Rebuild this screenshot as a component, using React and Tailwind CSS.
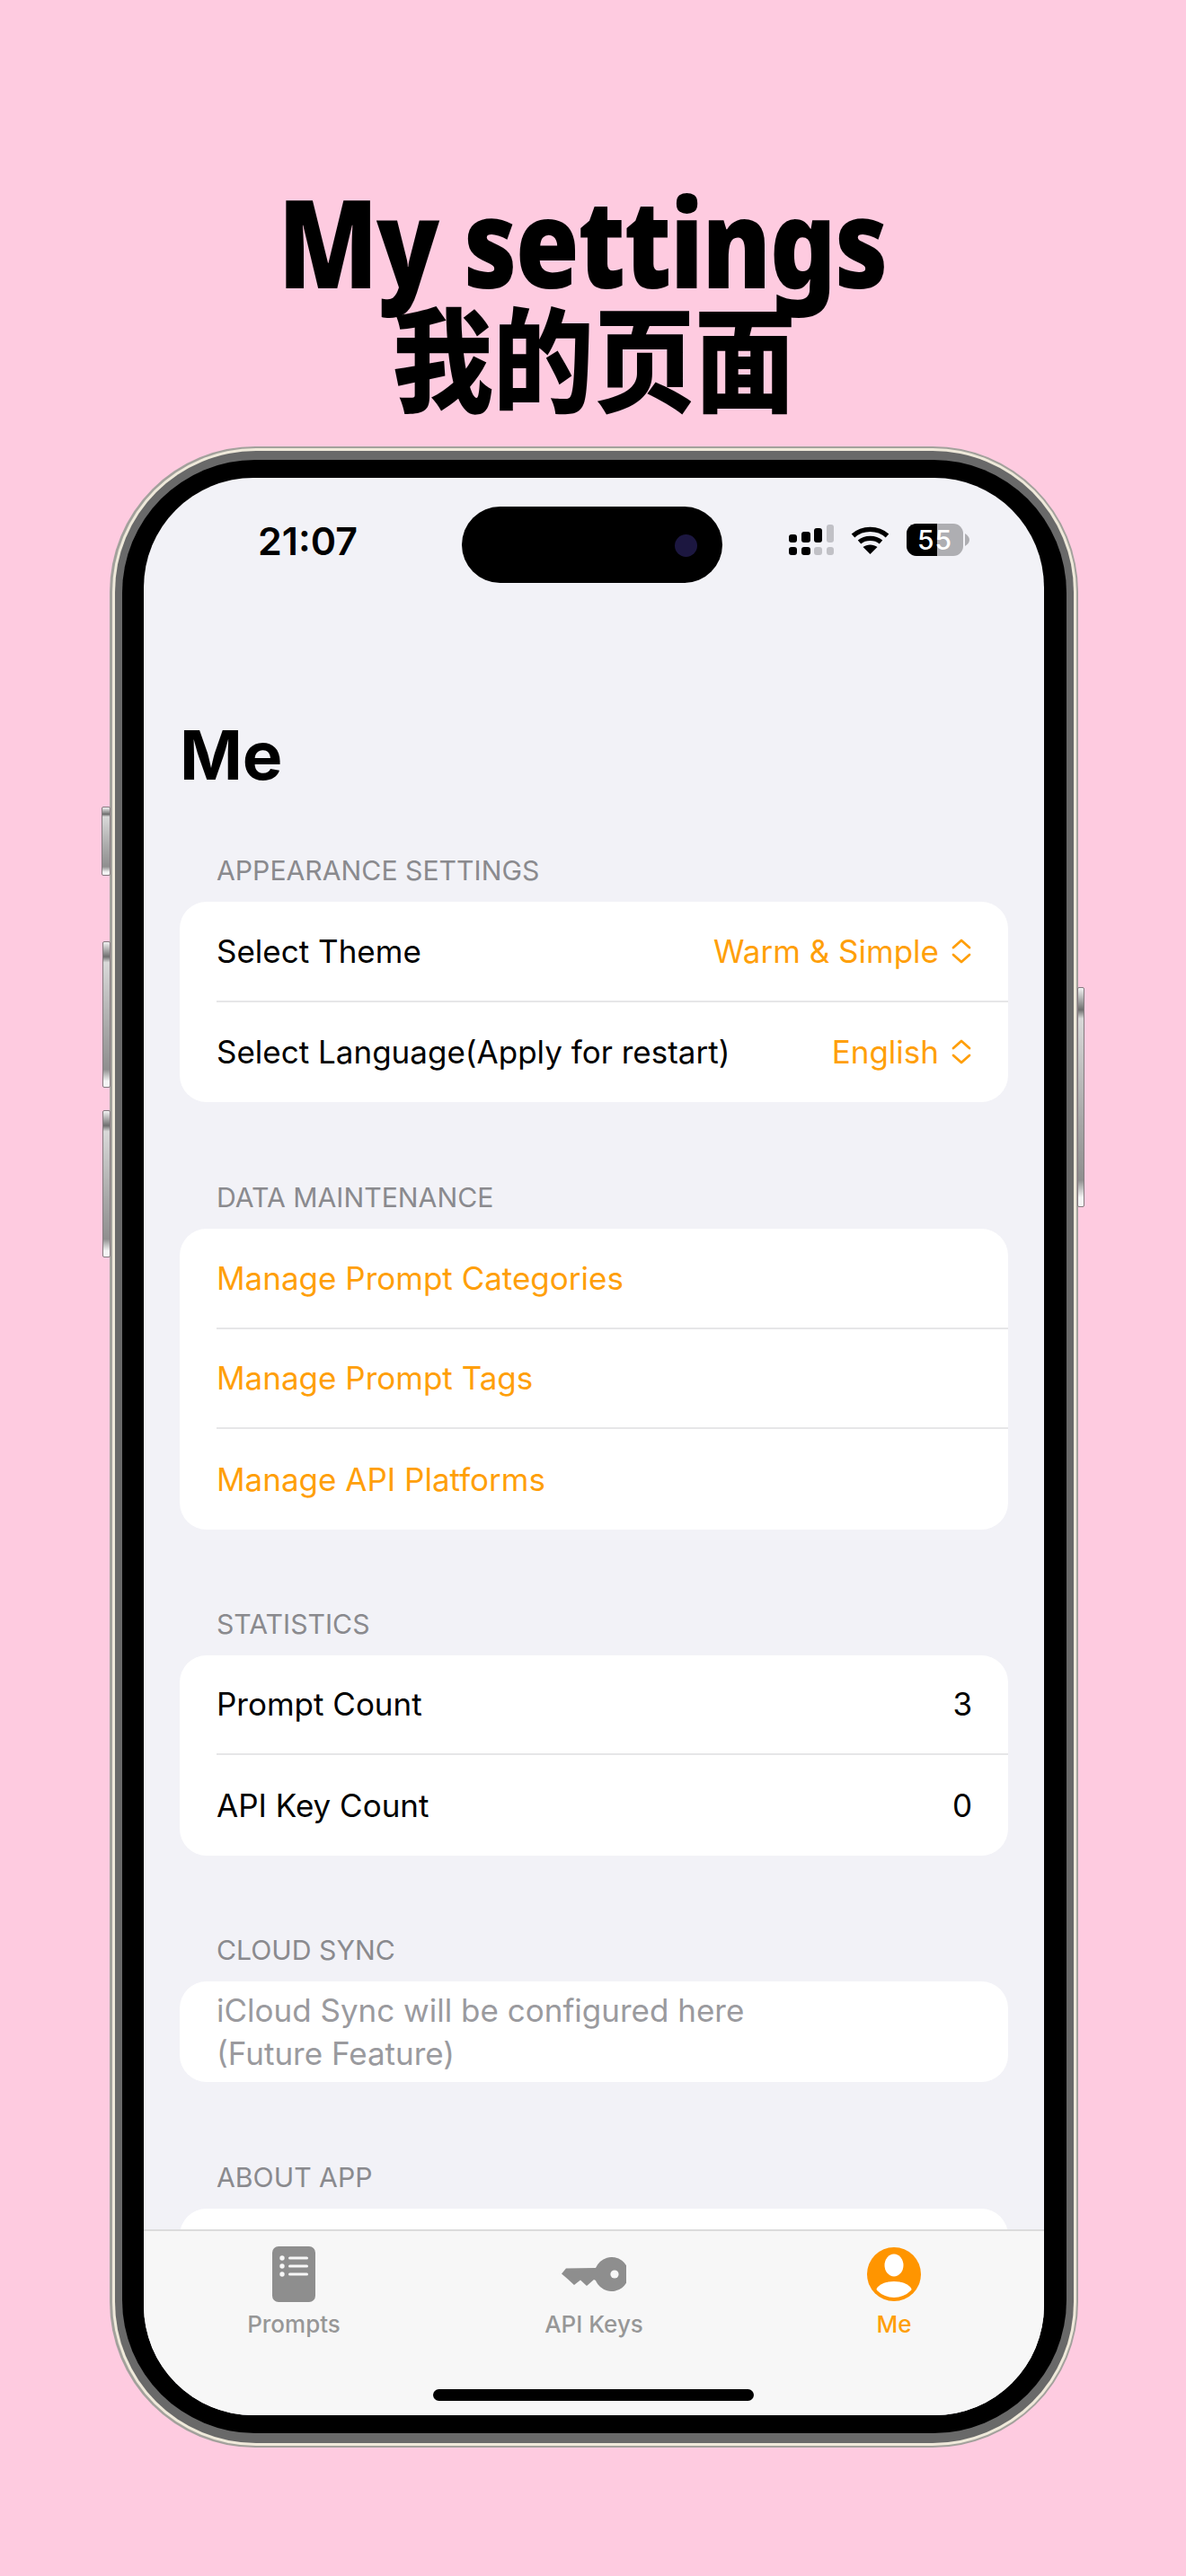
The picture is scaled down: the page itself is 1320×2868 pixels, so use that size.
const ORANGE = 'text-[#ff9f0a]'

const ChevronUpDown = () => (
  <svg width="24" height="32" viewBox="0 0 24 32" fill="none" stroke="#ff9f0a" strokeWidth="2.8" strokeLinecap="round" strokeLinejoin="round" className="ml-[13px]">
    <path d="M3 12 L12 4 L21 12" />
    <path d="M3 20 L12 28 L21 20" />
  </svg>
)

const Row = ({ children, last }) => (
  <div className={`h-[111.5px] ml-[41px] pr-10 flex items-center justify-between text-[35px] ${last ? '' : 'border-b-2 border-[#e6e6e8]'}`}>
    {children}
  </div>
)

const Section = ({ title, children, className = '' }) => (
  <section className={className}>
    <h2 className="h-[41px] ml-[81px] text-[30.2px] leading-[41px] text-[#8a8a8e] font-normal">{title}</h2>
    <div className="mt-[14px] mx-10 bg-white rounded-[30px] overflow-hidden">{children}</div>
  </section>
)

const SideButton = ({ className }) => (
  <div className={`absolute border border-[#85797f] rounded-[2px] bg-[linear-gradient(180deg,#f2f2f2_0%,#6f6f6f_10%,#d8d8d8_14%,#a8a8a8_60%,#8f8f8f_88%,#f4f4f4_96%)] ${className}`} />
)

const SignalIcon = () => (
  <svg width="50" height="34" viewBox="0 0 50 34" fill="#000">
    <rect x="0" y="11" width="9" height="9" rx="3" />
    <rect x="14" y="8" width="10" height="12" rx="3" />
    <rect x="28" y="4" width="9" height="16" rx="3" />
    <rect x="42" y="0" width="8" height="20" rx="3" fill="#c1c1c6" />
    <rect x="0" y="25" width="9" height="9" rx="3" />
    <rect x="14" y="25" width="10" height="9" rx="3" />
    <rect x="28" y="25" width="9" height="9" rx="3" fill="#c1c1c6" />
    <rect x="42" y="25" width="8" height="9" rx="3" fill="#c1c1c6" />
  </svg>
)

const WifiIcon = () => (
  <svg width="43" height="32" viewBox="0 0 43 32" fill="none" stroke="#000" strokeWidth="5.4">
    <path d="M2.5 11.5 C13 2 30 2 40.5 11.5" />
    <path d="M9.5 18.5 C16 13 27 13 33.5 18.5" />
    <path d="M21.5 32 L13.5 24 C18 20.5 25 20.5 29.5 24 Z" fill="#000" stroke="none" />
  </svg>
)

const Battery = () => (
  <div className="flex items-center">
    <div className="relative w-[63px] h-[36px] rounded-[11px] overflow-hidden bg-[#aeaeb2] flex items-center justify-center">
      <div className="absolute left-0 top-0 bottom-0 w-[34px] bg-black" />
      <span className="relative text-white text-[30px] font-medium leading-none font-['Inter',sans-serif] tracking-[1px]">55</span>
    </div>
    <svg width="5" height="14" viewBox="0 0 5 14" className="ml-[2px]"><path d="M0 0 C3 2 5 4 5 7 C5 10 3 12 0 14 Z" fill="#aeaeb2" /></svg>
  </div>
)

const PromptsIcon = () => (
  <svg width="48" height="62" viewBox="0 0 48 62">
    <rect width="48" height="62" rx="7" fill="#8e8e8e" />
    <g fill="#f7f7f7">
      <circle cx="11" cy="13" r="2.7" />
      <circle cx="11" cy="22" r="2.7" />
      <circle cx="11" cy="31" r="2.7" />
      <rect x="18" y="11.5" width="22" height="3" rx="1.5" />
      <rect x="18" y="20.5" width="22" height="3" rx="1.5" />
      <rect x="18" y="29.5" width="22" height="3" rx="1.5" />
    </g>
  </svg>
)

const KeyIcon = () => (
  <svg width="72" height="38" viewBox="0 0 72 38">
    <path d="M0 18.5 L5 12.5 L38 12 A19 19 0 1 1 38 26 L36 25 L28 32 L21 25.5 L14 31 L7 24.5 Z" fill="#8e8e8e" />
    <circle cx="59" cy="19" r="4.6" fill="#f7f7f7" />
  </svg>
)

const MeIcon = () => (
  <svg width="60" height="60" viewBox="0 0 60 60">
    <defs>
      <clipPath id="meClip"><circle cx="30" cy="30" r="26" /></clipPath>
    </defs>
    <circle cx="30" cy="30" r="30" fill="#ff9500" />
    <ellipse cx="30" cy="20" rx="10.5" ry="12.5" fill="#fff" />
    <ellipse cx="30" cy="49" rx="20" ry="11" fill="#fff" clipPath="url(#meClip)" />
  </svg>
)

const Tab = ({ icon, label, active }) => (
  <div className="flex-1 flex flex-col items-center">
    <div className="h-[66px] flex items-center justify-center">{icon}</div>
    <span className={`mt-[8px] text-[26px] leading-[30px] font-medium ${active ? ORANGE : 'text-[#979797]'}`}>{label}</span>
  </div>
)

export default function App() {
  return (
    <div className="w-[1320px] h-[2868px] bg-[#fecbe0] overflow-hidden font-['Inter',sans-serif] text-black">
      {/* promo title */}
      <div className="h-[497px] pt-[197px] flex flex-col items-center font-['Noto_Sans','Noto_Sans_CJK_SC',sans-serif] font-black">
        <div className="h-[130px] mr-[24px] text-[137px] leading-[142px] scale-x-[0.84] whitespace-nowrap tracking-[-2px]">My settings</div>
        <div className="ml-[2px] text-[126px] leading-[135px] scale-x-[0.89] whitespace-nowrap font-['Noto_Sans_CJK_SC',sans-serif]">我的页面</div>
      </div>

      {/* phone */}
      <div className="relative ml-[122px] w-[1078px] h-[2228px]">
        <SideButton className="left-[-9px] top-[401px] w-[10px] h-[77px]" />
        <SideButton className="left-[-8px] top-[551px] w-[9px] h-[163px]" />
        <SideButton className="left-[-8px] top-[739px] w-[9px] h-[164px]" />
        <SideButton className="right-[-7px] top-[602px] w-[8px] h-[245px]" />

        <div className="h-full rounded-[162px] bg-[#a3a19c] p-[2.5px] pt-[2px] pb-[2px]">
          <div className="h-full rounded-[160px] bg-[#efe9da] p-[3px]">
            <div className="h-full rounded-[157px] bg-[#696969] px-[8px] pt-[10px] pb-[11px]">
              <div className="h-full rounded-[148px] bg-black px-[24.5px] py-[20px]">
                <div className="h-full rounded-[122px] bg-[#f2f2f7] overflow-hidden flex flex-col">
                  {/* status bar */}
                  <div className="relative h-[117px] shrink-0">
                    <span className="absolute left-[127px] top-[45px] text-[43px] leading-[50px] font-semibold">21:07</span>
                    <div className="absolute left-[354px] top-[32px] w-[290px] h-[85px] rounded-full bg-black">
                      <div className="absolute left-[237px] top-[31px] w-[25px] h-[25px] rounded-full bg-[#1c1740]" />
                    </div>
                    <div className="absolute left-[718px] top-[51px] flex items-center gap-[19px]">
                      <SignalIcon />
                      <WifiIcon />
                      <Battery />
                    </div>
                  </div>

                  {/* content */}
                  <div className="flex-1 overflow-hidden">
                    <h1 className="mt-[150px] ml-10 text-[75px] leading-[84px] font-bold">Me</h1>
                    <Section title="APPEARANCE SETTINGS" className="mt-[66px]">
                      <Row>
                        <span>Select Theme</span>
                        <span className={`flex items-center ${ORANGE}`}>Warm &amp; Simple<ChevronUpDown /></span>
                      </Row>
                      <Row last>
                        <span>Select Language(Apply for restart)</span>
                        <span className={`flex items-center ${ORANGE}`}>English<ChevronUpDown /></span>
                      </Row>
                    </Section>
                    <Section title="DATA MAINTENANCE" className="mt-[86px]">
                      <Row><span className={ORANGE}>Manage Prompt Categories</span></Row>
                      <Row><span className={ORANGE}>Manage Prompt Tags</span></Row>
                      <Row last><span className={ORANGE}>Manage API Platforms</span></Row>
                    </Section>
                    <Section title="STATISTICS" className="mt-[85px]">
                      <Row><span>Prompt Count</span><span>3</span></Row>
                      <Row last><span>API Key Count</span><span>0</span></Row>
                    </Section>
                    <Section title="CLOUD SYNC" className="mt-[85px]">
                      <div className="h-[112px] pl-[41px] pt-[8px] text-[35px] leading-[48px] text-[#9a9a9e]">
                        iCloud Sync will be configured here<br />(Future Feature)
                      </div>
                    </Section>
                    <Section title="ABOUT APP" className="mt-[86px]">
                      <div className="h-[111px]" />
                    </Section>
                  </div>

                  {/* tab bar */}
                  <div className="relative h-[207px] shrink-0 bg-[#f7f7f7] border-t-2 border-[#dcdcdc] flex pt-[15px]">
                    <Tab icon={<PromptsIcon />} label="Prompts" />
                    <Tab icon={<KeyIcon />} label="API Keys" />
                    <Tab icon={<MeIcon />} label="Me" active />
                    <div className="absolute left-[322px] bottom-[16px] w-[357px] h-[13px] rounded-full bg-black" />
                  </div>
                </div>
              </div>
            </div>
          </div>
        </div>
      </div>
    </div>
  )
}
